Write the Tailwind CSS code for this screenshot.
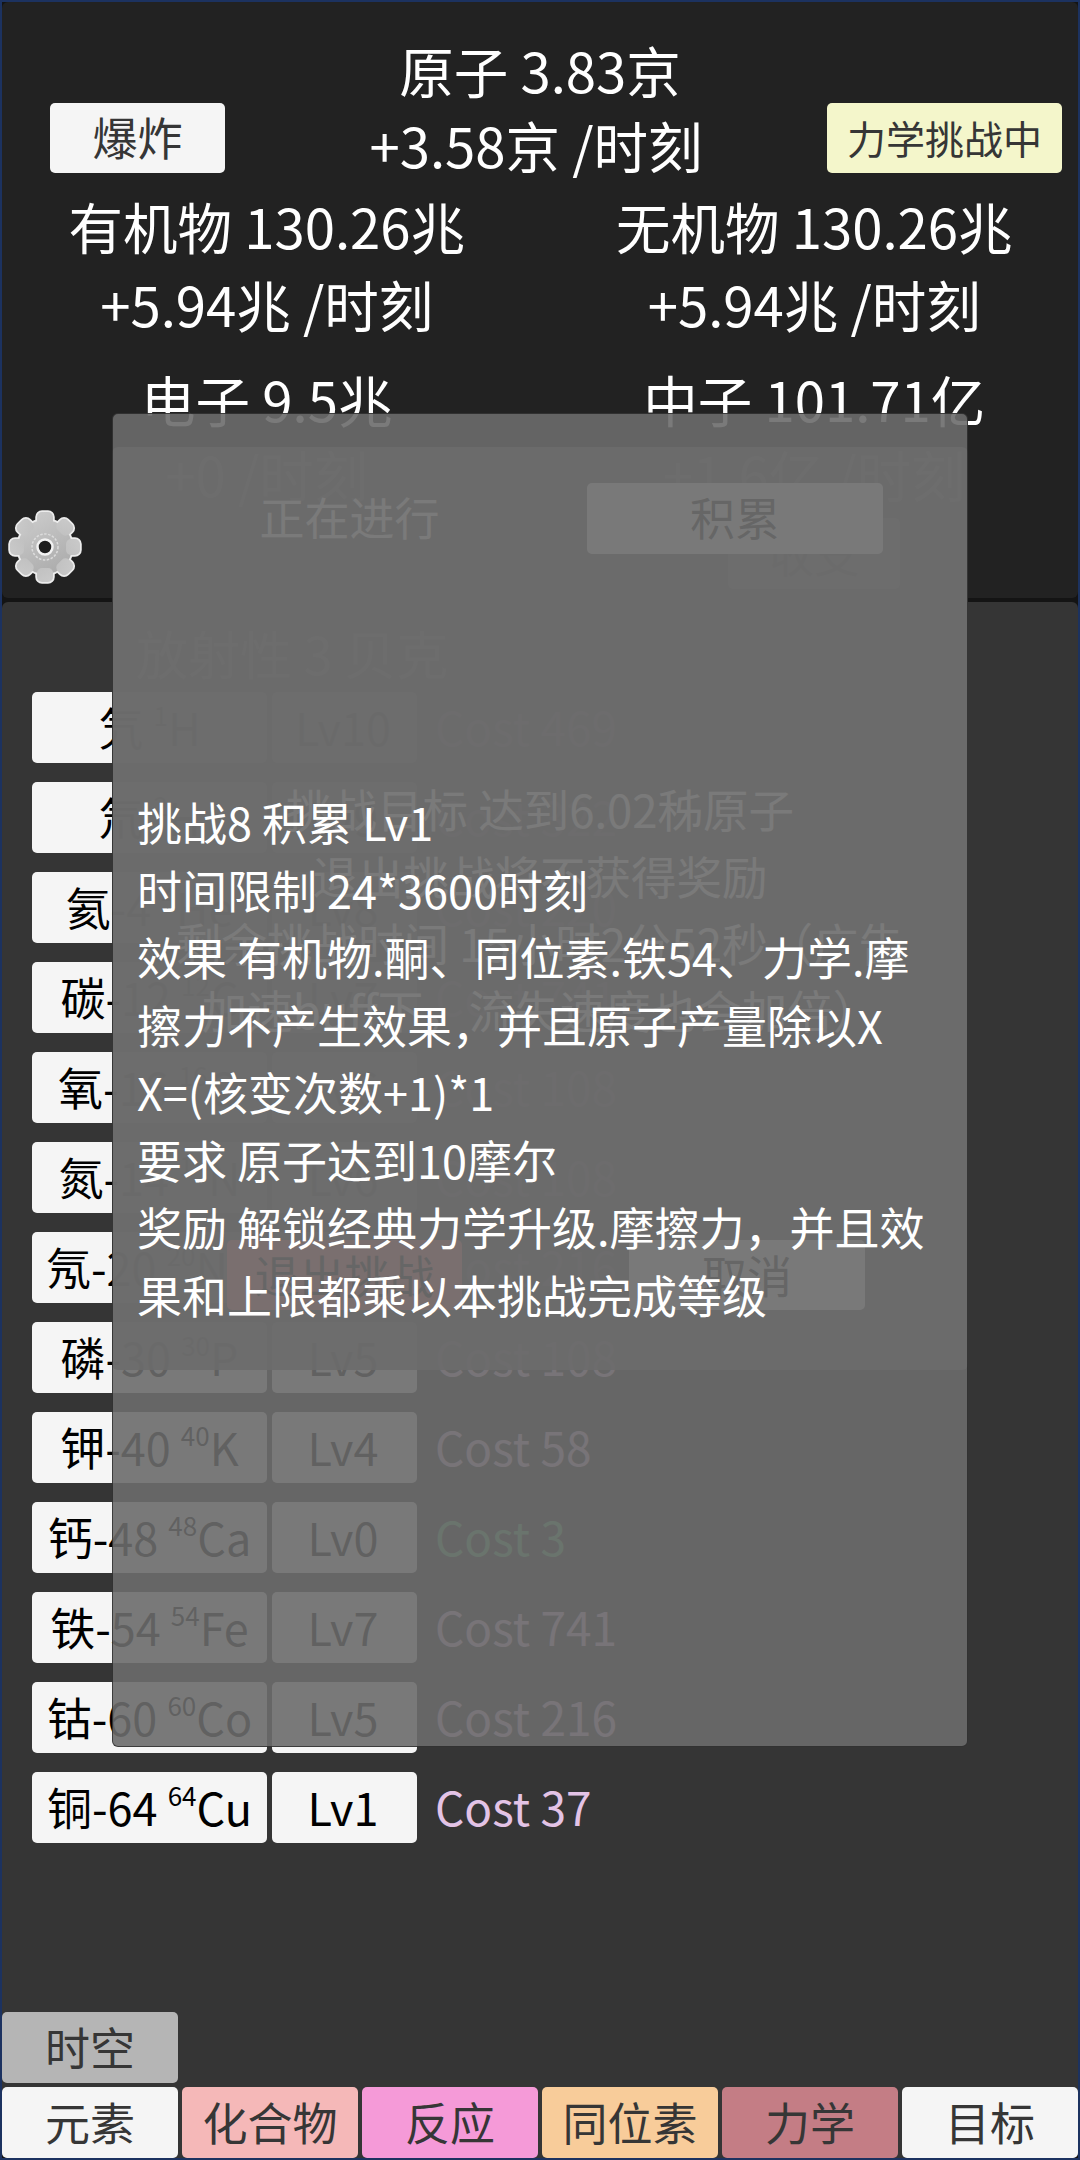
<!DOCTYPE html>
<html lang="zh">
<head>
<meta charset="utf-8">
<script src="https://cdn.jsdelivr.net/npm/@tailwindcss/browser@4"></script>
</head>
<body class="bg-[#141414]">
<div class="relative w-[1080px] h-[2160px] overflow-hidden box-border border-2 border-[#1c3260] bg-[#141414] flex flex-col gap-[4px] [font-family:'Noto_Sans_CJK_SC','Noto_Sans',sans-serif]">

  <!-- top panel -->
  <section class="relative h-[596px] shrink-0 bg-[#222222] rounded-md pt-[30px] text-white text-[54.5px] leading-[75px]">
    <div class="grid grid-cols-[1fr_auto_1fr] items-end">
      <div class="pl-[48px] pb-[9px]">
        <button class="w-[175px] h-[70px] pb-[2px] rounded-[5px] bg-[#f5f5f5] text-[#363636] text-[45px] leading-[68px]">爆炸</button>
      </div>
      <div class="text-center whitespace-nowrap">
        <div>原子 3.83京</div>
        <div class="-translate-x-[4px]">+3.58京 /时刻</div>
      </div>
      <div class="flex justify-end pr-[16px] pb-[9px]">
        <button class="w-[235px] h-[70px] pb-[2px] rounded-[5px] bg-[#f4f6cb] text-[#363636] text-[39px] leading-[68px]">力学挑战中</button>
      </div>
    </div>
    <div class="flex gap-[20px] pl-[1px] mt-[6px]">
      <div class="w-[528px] flex flex-col items-center whitespace-nowrap">
        <div>有机物 130.26兆</div>
        <div class="mt-[3px]">+5.94兆 /时刻</div>
        <div class="mt-[20px]">电子 9.5兆</div>
        <div>+0 /时刻</div>
      </div>
      <div class="w-[528px] flex flex-col items-center whitespace-nowrap">
        <div>无机物 130.26兆</div>
        <div class="mt-[3px]">+5.94兆 /时刻</div>
        <div class="mt-[20px]">中子 101.71亿</div>
        <div>+1.6亿 /时刻</div>
        <button class="mt-[7px] w-[172px] h-[71px] rounded-[5px] bg-[#f5f5f5] text-[#363636] text-[45px] leading-[71px]">收支</button>
      </div>
    </div>
    <svg class="absolute left-[3px] top-[505px]" width="80" height="80" viewBox="-40 -40 80 80" aria-hidden="true">
      <defs>
        <linearGradient id="g" gradientUnits="userSpaceOnUse" x1="-20" y1="-36" x2="20" y2="36">
          <stop offset="0" stop-color="#cdcdcd"/>
          <stop offset="1" stop-color="#a6a6a6"/>
        </linearGradient>
      </defs>
      <g fill="#ececec" stroke="#ececec" stroke-width="3.5">
        <circle r="27"/>
        <rect x="-8" y="-35" width="16" height="14" rx="5"/>
        <rect x="-8" y="-35" width="16" height="14" rx="5" transform="rotate(45)"/>
        <rect x="-8" y="-35" width="16" height="14" rx="5" transform="rotate(90)"/>
        <rect x="-8" y="-35" width="16" height="14" rx="5" transform="rotate(135)"/>
        <rect x="-8" y="-35" width="16" height="14" rx="5" transform="rotate(180)"/>
        <rect x="-8" y="-35" width="16" height="14" rx="5" transform="rotate(225)"/>
        <rect x="-8" y="-35" width="16" height="14" rx="5" transform="rotate(270)"/>
        <rect x="-8" y="-35" width="16" height="14" rx="5" transform="rotate(315)"/>
      </g>
      <g fill="url(#g)">
        <circle r="27"/>
        <rect x="-8" y="-35" width="16" height="14" rx="5"/>
        <rect x="-8" y="-35" width="16" height="14" rx="5" transform="rotate(45)"/>
        <rect x="-8" y="-35" width="16" height="14" rx="5" transform="rotate(90)"/>
        <rect x="-8" y="-35" width="16" height="14" rx="5" transform="rotate(135)"/>
        <rect x="-8" y="-35" width="16" height="14" rx="5" transform="rotate(180)"/>
        <rect x="-8" y="-35" width="16" height="14" rx="5" transform="rotate(225)"/>
        <rect x="-8" y="-35" width="16" height="14" rx="5" transform="rotate(270)"/>
        <rect x="-8" y="-35" width="16" height="14" rx="5" transform="rotate(315)"/>
      </g>
      <circle r="13" fill="none" stroke="#dcdcdc" stroke-width="1.5" stroke-dasharray="2.5 1.5"/>
      <circle r="7.5" fill="#1e1e1e" stroke="#f2f2f2" stroke-width="2.5"/>
    </svg>
  </section>

  <!-- lower panel -->
  <section class="flex-1 min-h-0 flex flex-col bg-[#353535] rounded-md">
    <div class="pt-[13px] pb-[2px] pl-[134px] text-white text-[52px] leading-[75px]">放射性 3 贝克</div>
    <div class="flex flex-col gap-[19px] pl-[30px] text-[45px] leading-[69px] text-black">
      <div class="flex items-center"><button class="w-[235px] h-[71px] pb-[2px] rounded-[5px] bg-[#f5f5f5] whitespace-nowrap">氕 <sup class="text-[26px] top-[-20px]">1</sup>H</button><button class="ml-[5px] w-[145px] h-[71px] pb-[2px] pr-[3px] rounded-[5px] bg-[#f5f5f5]">Lv10</button><span class="ml-[18px] pb-[2px] text-[46px] text-[#e3c3e6]">Cost 469</span></div>
      <div class="flex items-center"><button class="w-[235px] h-[71px] pb-[2px] rounded-[5px] bg-[#f5f5f5] whitespace-nowrap">氘 <sup class="text-[26px] top-[-20px]">2</sup>H</button><button class="ml-[5px] w-[145px] h-[71px] pb-[2px] pr-[3px] rounded-[5px] bg-[#f5f5f5]">Lv9</button><span class="ml-[18px] pb-[2px] text-[46px] text-[#e3c3e6]">Cost 322</span></div>
      <div class="flex items-center"><button class="w-[235px] h-[71px] pb-[2px] rounded-[5px] bg-[#f5f5f5] whitespace-nowrap">氦-4 <sup class="text-[26px] top-[-20px]">4</sup>He</button><button class="ml-[5px] w-[145px] h-[71px] pb-[2px] pr-[3px] rounded-[5px] bg-[#f5f5f5]">Lv8</button><span class="ml-[18px] pb-[2px] text-[46px] text-[#e3c3e6]">Cost 220</span></div>
      <div class="flex items-center"><button class="w-[235px] h-[71px] pb-[2px] rounded-[5px] bg-[#f5f5f5] whitespace-nowrap">碳-12 <sup class="text-[26px] top-[-20px]">12</sup>C</button><button class="ml-[5px] w-[145px] h-[71px] pb-[2px] pr-[3px] rounded-[5px] bg-[#f5f5f5]">Lv7</button><span class="ml-[18px] pb-[2px] text-[46px] text-[#e3c3e6]">Cost 741</span></div>
      <div class="flex items-center"><button class="w-[235px] h-[71px] pb-[2px] rounded-[5px] bg-[#f5f5f5] whitespace-nowrap">氧-16 <sup class="text-[26px] top-[-20px]">16</sup>O</button><button class="ml-[5px] w-[145px] h-[71px] pb-[2px] pr-[3px] rounded-[5px] bg-[#f5f5f5]">Lv6</button><span class="ml-[18px] pb-[2px] text-[46px] text-[#e3c3e6]">Cost 108</span></div>
      <div class="flex items-center"><button class="w-[235px] h-[71px] pb-[2px] rounded-[5px] bg-[#f5f5f5] whitespace-nowrap">氮-14 <sup class="text-[26px] top-[-20px]">14</sup>N</button><button class="ml-[5px] w-[145px] h-[71px] pb-[2px] pr-[3px] rounded-[5px] bg-[#f5f5f5]">Lv6</button><span class="ml-[18px] pb-[2px] text-[46px] text-[#e3c3e6]">Cost 108</span></div>
      <div class="flex items-center"><button class="w-[235px] h-[71px] pb-[2px] rounded-[5px] bg-[#f5f5f5] whitespace-nowrap">氖-20 <sup class="text-[26px] top-[-20px]">20</sup>Ne</button><button class="ml-[5px] w-[145px] h-[71px] pb-[2px] pr-[3px] rounded-[5px] bg-[#f5f5f5]">Lv5</button><span class="ml-[18px] pb-[2px] text-[46px] text-[#e3c3e6]">Cost 216</span></div>
      <div class="flex items-center"><button class="w-[235px] h-[71px] pb-[2px] rounded-[5px] bg-[#f5f5f5] whitespace-nowrap">磷-30 <sup class="text-[26px] top-[-20px]">30</sup>P</button><button class="ml-[5px] w-[145px] h-[71px] pb-[2px] pr-[3px] rounded-[5px] bg-[#f5f5f5]">Lv5</button><span class="ml-[18px] pb-[2px] text-[46px] text-[#e3c3e6]">Cost 108</span></div>
      <div class="flex items-center"><button class="w-[235px] h-[71px] pb-[2px] rounded-[5px] bg-[#f5f5f5] whitespace-nowrap">钾-40 <sup class="text-[26px] top-[-20px]">40</sup>K</button><button class="ml-[5px] w-[145px] h-[71px] pb-[2px] pr-[3px] rounded-[5px] bg-[#f5f5f5]">Lv4</button><span class="ml-[18px] pb-[2px] text-[46px] text-[#e3c3e6]">Cost 58</span></div>
      <div class="flex items-center"><button class="w-[235px] h-[71px] pb-[2px] rounded-[5px] bg-[#f5f5f5] whitespace-nowrap">钙-48 <sup class="text-[26px] top-[-20px]">48</sup>Ca</button><button class="ml-[5px] w-[145px] h-[71px] pb-[2px] pr-[3px] rounded-[5px] bg-[#f5f5f5]">Lv0</button><span class="ml-[18px] pb-[2px] text-[46px] text-[#5fbf7a]">Cost 3</span></div>
      <div class="flex items-center"><button class="w-[235px] h-[71px] pb-[2px] rounded-[5px] bg-[#f5f5f5] whitespace-nowrap">铁-54 <sup class="text-[26px] top-[-20px]">54</sup>Fe</button><button class="ml-[5px] w-[145px] h-[71px] pb-[2px] pr-[3px] rounded-[5px] bg-[#f5f5f5]">Lv7</button><span class="ml-[18px] pb-[2px] text-[46px] text-[#e3c3e6]">Cost 741</span></div>
      <div class="flex items-center"><button class="w-[235px] h-[71px] pb-[2px] rounded-[5px] bg-[#f5f5f5] whitespace-nowrap">钴-60 <sup class="text-[26px] top-[-20px]">60</sup>Co</button><button class="ml-[5px] w-[145px] h-[71px] pb-[2px] pr-[3px] rounded-[5px] bg-[#f5f5f5]">Lv5</button><span class="ml-[18px] pb-[2px] text-[46px] text-[#e3c3e6]">Cost 216</span></div>
      <div class="flex items-center"><button class="w-[235px] h-[71px] pb-[2px] rounded-[5px] bg-[#f5f5f5] whitespace-nowrap">铜-64 <sup class="text-[26px] top-[-20px]">64</sup>Cu</button><button class="ml-[5px] w-[145px] h-[71px] pb-[2px] pr-[3px] rounded-[5px] bg-[#f5f5f5]">Lv1</button><span class="ml-[18px] pb-[2px] text-[46px] text-[#e3c3e6]">Cost 37</span></div>
    </div>
    <div class="mt-auto flex flex-col gap-[4px] text-[45px] leading-[69px] text-[#363636]">
      <button class="w-[176px] h-[71px] pb-[2px] rounded-[5px] bg-[#b5b5b5]">时空</button>
      <div class="flex gap-[4px]">
        <button class="w-[176px] h-[71px] pb-[2px] rounded-[5px] bg-[#f5f5f5]">元素</button>
        <button class="w-[176px] h-[71px] pb-[2px] rounded-[5px] bg-[#f5b8b8]">化合物</button>
        <button class="w-[176px] h-[71px] pb-[2px] rounded-[5px] bg-[#f59ad8]">反应</button>
        <button class="w-[176px] h-[71px] pb-[2px] rounded-[5px] bg-[#f8cc9a]">同位素</button>
        <button class="w-[176px] h-[71px] pb-[2px] rounded-[5px] bg-[#c47d85]">力学</button>
        <button class="w-[176px] h-[71px] pb-[2px] rounded-[5px] bg-[#f5f5f5]">目标</button>
      </div>
    </div>
  </section>

  <!-- challenge dialog -->
  <div class="absolute left-[110px] top-[445px] w-[856px] h-[923px] rounded-md bg-[#6b6b6b]/90 pt-[36px] text-white text-[45.5px]">
    <div class="flex items-center h-[71px] text-[45px]">
      <div class="w-[475px] pb-[3px] text-center">正在进行</div>
      <button class="w-[296px] h-[71px] pb-[3px] rounded-[5px] bg-[#f5f5f5] text-[#363636]">积累</button>
    </div>
    <div class="mt-[221px] text-center leading-[67px] whitespace-nowrap">
      <div>挑战目标 达到6.02秭原子</div>
      <div>退出挑战将不获得奖励</div>
      <div>剩余挑战时间 15小时2分52秒（广告</div>
      <div>加速buff下，流失速度也会加倍）</div>
    </div>
    <div class="mt-[197px] pl-[115px] flex gap-[167px] text-[45px]">
      <button class="w-[235px] h-[70px] rounded-[5px] bg-[#ff8c8c] text-[#363636]">退出挑战</button>
      <button class="w-[236px] h-[70px] rounded-[5px] bg-[#f5f5f5] text-[#363636]">取消</button>
    </div>
  </div>

  <!-- tooltip -->
  <div class="absolute left-[110px] top-[411px] w-[856px] h-[1334px] box-border rounded-md border border-black/50 bg-[#6b6b6b]/90 pt-[374px] pl-[24px] text-white text-[45px] leading-[67.5px] whitespace-nowrap">
    <div>挑战8 积累 Lv1</div>
    <div>时间限制 24*3600时刻</div>
    <div>效果 有机物.酮、同位素.铁54、力学.摩</div>
    <div>擦力不产生效果，并且原子产量除以X</div>
    <div>X=(核变次数+1)*1</div>
    <div>要求 原子达到10摩尔</div>
    <div>奖励 解锁经典力学升级.摩擦力，并且效</div>
    <div>果和上限都乘以本挑战完成等级</div>
  </div>
</div>
</body>
</html>
